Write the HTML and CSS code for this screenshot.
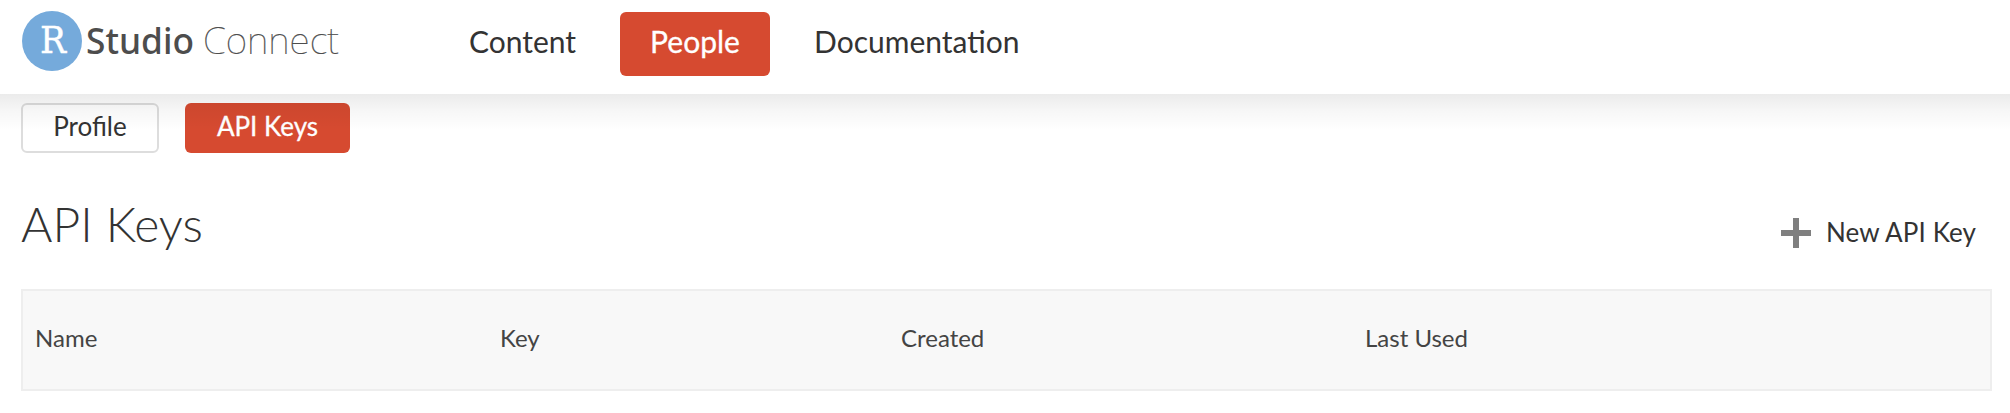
FILE: index.html
```html
<!DOCTYPE html>
<html lang="en">
<head>
<meta charset="utf-8">
<title>RStudio Connect</title>
<link rel="stylesheet" href="styles.css">
</head>
<body>
<header class="topbar">
  <svg class="logo" width="320" height="72" viewBox="0 0 320 72">
    <circle cx="31" cy="32" r="30" fill="#75aadb"/>
    <text class="logo-r" x="19" y="44" textLength="26" lengthAdjust="spacingAndGlyphs">R</text>
    <text class="logo-studio" x="65" y="45" textLength="108" lengthAdjust="spacingAndGlyphs">Studio</text>
    <text class="logo-connect" x="182" y="45" textLength="136" lengthAdjust="spacingAndGlyphs">Connect</text>
  </svg>
  <nav class="nav">
    <a class="nav-item">Content</a>
    <a class="nav-item active">People</a>
    <a class="nav-item">Documentation</a>
  </nav>
</header>
<main class="page">
  <div class="tabs">
    <a class="tab profile">Profile</a>
    <a class="tab keys">API Keys</a>
  </div>
  <div class="title-row">
    <h1 class="title">API Keys</h1>
    <button class="new-key">
      <svg width="30" height="30" viewBox="0 0 30 30"><path d="M12 0h6v12h12v6H18v12h-6V18H0v-6h12z" fill="#7f7f7f"/></svg>
      <span class="new-key-label">New API Key</span>
    </button>
  </div>
  <div class="table-head">
    <span>Name</span><span>Key</span><span>Created</span><span>Last Used</span>
  </div>
</main>
</body>
</html>
```

FILE: styles.css
```css
* { box-sizing: border-box; }
body {
  margin: 0;
  background: #fff;
  color: #333;
  font-family: Lato, sans-serif;
}
.topbar {
  position: relative;
  display: flex;
  align-items: flex-start;
  height: 94px;
  padding: 9px 0 0 21px;
  background: #fff;
}
.topbar::after {
  content: "";
  position: absolute;
  z-index: 1;
  left: 0;
  right: 0;
  top: 94px;
  height: 36px;
  background: linear-gradient(rgba(0,0,0,.078), rgba(0,0,0,.035) 45%, rgba(0,0,0,0));
  pointer-events: none;
}
.logo { flex: none; overflow: visible; }
.logo-r { font: 37px "DejaVu Serif", serif; fill: #fff; stroke: #fff; stroke-width: .4px; }
.logo-studio { font: 500 37px "Noto Sans", sans-serif; fill: #4d4d4d; }
.logo-connect { font: 100 37px "Noto Sans", sans-serif; fill: #4d4d4d; stroke: #4d4d4d; stroke-width: .2px; }
.nav {
  display: flex;
  margin: 3px 0 0 98px;
}
.nav-item {
  height: 64px;
  padding: 0 30px;
  margin-right: 14px;
  border-radius: 6px;
  font-size: 30px;
  line-height: 58px;
}
.active {
  width: 150px;
  background: #d64a30;
  color: #fff;
  -webkit-text-stroke: .3px #fff;
}
.page { padding: 9px 18px 0 21px; }
.tabs { display: flex; gap: 26px; }
.tab {
  height: 50px;
  border-radius: 6px;
  font-size: 26px;
  line-height: 47px;
  text-align: center;
}
.profile { width: 138px; border: 2px solid #ddd; line-height: 43px; }
.keys { width: 165px; background: #d64a30; color: #fff; -webkit-text-stroke: .3px #fff; }
.title-row {
  display: flex;
  justify-content: space-between;
  align-items: center;
  height: 136px;
  padding-right: 16px;
}
.title { margin: 6px 0 0; font-size: 48px; font-weight: 300; line-height: 58px; }
.new-key {
  display: flex;
  align-items: center;
  gap: 15px;
  margin-top: 24px;
  padding: 0;
  border: 0;
  background: none;
  color: #333;
  font: 26px/32px Lato, sans-serif;
}
.new-key-label { padding-bottom: 3px; letter-spacing: .1px; }
.table-head {
  display: grid;
  grid-template-columns: 465px 401px 464px 1fr;
  align-items: center;
  height: 102px;
  padding: 0 12px 6px;
  border: 2px solid #eee;
  background: #f8f8f8;
  color: #444;
  font-size: 24px;
}
```
